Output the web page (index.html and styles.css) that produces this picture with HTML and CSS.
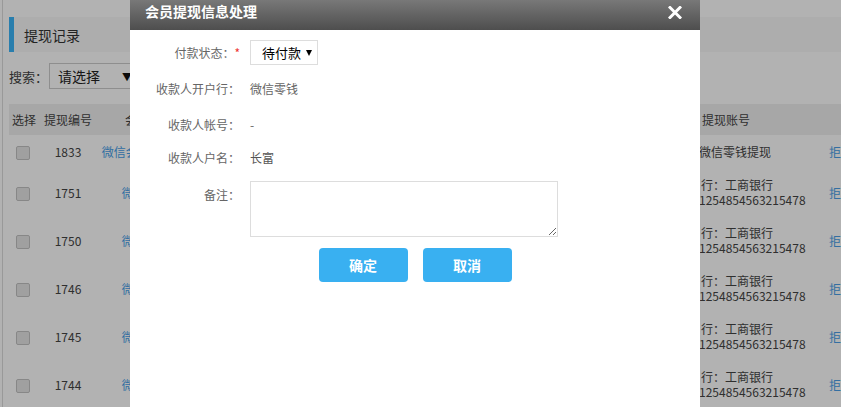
FILE: index.html
```html
<!DOCTYPE html>
<html lang="zh-CN">
<head>
<meta charset="utf-8">
<title>提现记录</title>
<link rel="stylesheet" href="styles.css">
</head>
<body>
<div class="page">
  <div class="title-bar"><span class="title-mark"></span><span class="title-text">提现记录</span></div>
  <div class="search-row">
    <span class="search-label">搜索：</span>
    <div class="fake-select"><span>请选择</span><span class="fake-arrow">▼</span></div>
  </div>
  <table class="list">
    <colgroup>
      <col class="c-check"><col class="c-id"><col class="c-user"><col class="c-amount"><col class="c-time"><col class="c-status"><col class="c-acc"><col class="c-op">
    </colgroup>
    <thead>
      <tr><th>选择</th><th>提现编号</th><th>会员账号</th><th>提现金额</th><th>申请时间</th><th>状态</th><th class="acc">提现账号</th><th class="op"></th></tr>
    </thead>
    <tbody>
      <tr class="first"><td><span class="chk"></span></td><td>1833</td><td><a class="link">微信会员1008611</a></td><td>100.00</td><td>2017-06-01</td><td>待付款</td><td class="acc"><span class="l2">微信零钱提现</span></td><td class="op"><a class="link">拒绝</a></td></tr>
      <tr><td><span class="chk"></span></td><td>1751</td><td><a class="link">微信用户1</a></td><td>50.00</td><td>2017-05-20</td><td>待付款</td><td class="acc"><span class="l1">开户行：工商银行</span><span class="l2">1254854563215478</span></td><td class="op"><a class="link">拒绝</a></td></tr>
      <tr><td><span class="chk"></span></td><td>1750</td><td><a class="link">微信用户1</a></td><td>50.00</td><td>2017-05-20</td><td>待付款</td><td class="acc"><span class="l1">开户行：工商银行</span><span class="l2">1254854563215478</span></td><td class="op"><a class="link">拒绝</a></td></tr>
      <tr><td><span class="chk"></span></td><td>1746</td><td><a class="link">微信用户1</a></td><td>50.00</td><td>2017-05-19</td><td>待付款</td><td class="acc"><span class="l1">开户行：工商银行</span><span class="l2">1254854563215478</span></td><td class="op"><a class="link">拒绝</a></td></tr>
      <tr><td><span class="chk"></span></td><td>1745</td><td><a class="link">微信用户1</a></td><td>50.00</td><td>2017-05-19</td><td>待付款</td><td class="acc"><span class="l1">开户行：工商银行</span><span class="l2">1254854563215478</span></td><td class="op"><a class="link">拒绝</a></td></tr>
      <tr><td><span class="chk"></span></td><td>1744</td><td><a class="link">微信用户1</a></td><td>50.00</td><td>2017-05-18</td><td>待付款</td><td class="acc"><span class="l1">开户行：工商银行</span><span class="l2">1254854563215478</span></td><td class="op"><a class="link">拒绝</a></td></tr>
    </tbody>
  </table>
</div>

<div class="mask"></div>

<div class="dialog">
  <div class="dialog-head">
    <span class="dialog-title">会员提现信息处理</span>
    <svg class="dialog-close" width="14" height="13" viewBox="0 0 14 13" aria-hidden="true"><path d="M2 1.5 L12 11.5 M12 1.5 L2 11.5" stroke="#fff" stroke-width="3" stroke-linecap="square"/></svg>
  </div>
  <div class="dialog-body">
    <div class="form-row row-status">
      <label class="form-label">付款状态：<span class="req">*</span></label>
      <div class="status-select"><span class="status-text">待付款</span><svg width="6" height="6" viewBox="0 0 6 6" aria-hidden="true"><path d="M0 0 H6 L3 6 Z" fill="#000"/></svg></div>
    </div>
    <div class="form-row row-bank">
      <label class="form-label">收款人开户行：</label>
      <span class="form-value">微信零钱</span>
    </div>
    <div class="form-row row-account">
      <label class="form-label">收款人帐号：</label>
      <span class="form-value">-</span>
    </div>
    <div class="form-row row-name">
      <label class="form-label">收款人户名：</label>
      <span class="form-value dark">长富</span>
    </div>
    <div class="form-row row-note">
      <label class="form-label note-label">备注：</label>
      <textarea class="note"></textarea>
    </div>
    <div class="buttons">
      <button class="btn">确定</button>
      <button class="btn">取消</button>
    </div>
  </div>
</div>
</body>
</html>
```

FILE: styles.css
```css
html, body {
  margin: 0;
  padding: 0;
  height: 100%;
  overflow: hidden;
  background: #fff;
  font-family: "Noto Sans CJK SC", "Microsoft YaHei", "Noto Sans", sans-serif;
  color: #333;
}

.page {
  margin-left: 2px;
  border-left: 1px solid #dcdcdc;
  padding: 17px 0 0 6px;
  width: 900px;
  min-height: 100%;
  box-sizing: border-box;
}

.title-bar {
  display: flex;
  align-items: center;
  height: 35px;
  background: #f8f8f8;
}
.title-mark {
  width: 5px;
  height: 35px;
  background: #3cb5f8;
}
.title-text {
  margin-left: 10px;
  font-size: 14px;
  color: #333;
}

.search-row {
  display: flex;
  align-items: center;
  margin-top: 11px;
  height: 26px;
}
.search-label {
  font-size: 13px;
  color: #444;
  width: 40px;
}
.fake-select {
  display: flex;
  align-items: center;
  justify-content: space-between;
  box-sizing: border-box;
  width: 92px;
  height: 26px;
  border: 1px solid #ccc;
  padding: 0 8px 0 8px;
  font-size: 14px;
  color: #222;
  background: #fff;
}
.fake-arrow {
  font-size: 10px;
  color: #111;
}

.list {
  margin-top: 15px;
  border-collapse: collapse;
  table-layout: fixed;
  width: 876px;
  font-size: 12px;
  color: #444;
}
.c-check { width: 30px; }
.c-id { width: 58px; }
.c-user { width: 104px; }
.c-amount { width: 100px; }
.c-time { width: 300px; }
.c-status { width: 97px; }
.c-acc { width: 127px; }
.c-op { width: 60px; }

.list th, .list td {
  padding: 0;
  text-align: center;
  vertical-align: middle;
  white-space: nowrap;
  overflow: hidden;
  font-weight: normal;
}
.list thead tr {
  height: 31px;
  background: #f0f0f0;
}
.list thead th {
  color: #444;
}
.list tbody tr { height: 48px; }
.list tbody tr.first { height: 33px; }

.list .acc {
  text-align: left;
  line-height: 15px;
  overflow: visible;
}
.list th.acc { padding-left: 4px; }
.list .op {
  text-align: left;
  padding-left: 4px;
}
.l1 {
  display: block;
  margin-left: -21px;
}
.l2 {
  display: block;
  margin-left: 1px;
}

.link {
  color: #4a9fe8;
  text-decoration: none;
}

.chk {
  display: inline-block;
  width: 12px;
  height: 12px;
  border: 1px solid #c2c2c2;
  border-radius: 2px;
  background: #e6e6e6;
  vertical-align: middle;
  margin-left: -2px;
}

.mask {
  position: fixed;
  inset: 0;
  background: rgba(0, 0, 0, 0.3);
  z-index: 1;
}

.dialog {
  position: fixed;
  left: 130px;
  top: 0;
  bottom: 0;
  width: 570px;
  background: #fff;
  z-index: 2;
}
.dialog-head {
  display: flex;
  align-items: flex-start;
  justify-content: space-between;
  height: 30px;
  box-sizing: border-box;
  padding: 2px 18px 0 15px;
  background: linear-gradient(to bottom, #787878, #4e4e4e);
}
.dialog-title {
  color: #fff;
  font-weight: bold;
  font-size: 14px;
  line-height: 18px;
}
.dialog-close {
  margin-top: 4px;
}

.dialog-body {
  padding-top: 10px;
}
.form-row {
  display: flex;
  align-items: center;
  gap: 10px;
}
.form-label {
  width: 110px;
  text-align: right;
  font-size: 12px;
  color: #666;
  line-height: 20px;
  flex: none;
}
.req {
  color: #e33;
}
.form-value {
  font-size: 12px;
  color: #666;
  line-height: 20px;
}
.form-value.dark { color: #555; }

.row-status { height: 25px; }
.row-bank { margin-top: 14px; }
.row-account { margin-top: 16px; }
.row-name { margin-top: 13px; }
.row-note {
  margin-top: 13px;
  align-items: flex-start;
}
.note-label { padding-top: 4px; }

.status-select {
  display: flex;
  align-items: center;
  justify-content: space-between;
  box-sizing: border-box;
  width: 68px;
  height: 25px;
  border: 1px solid #ddd;
  padding: 0 5px 0 11px;
  font-size: 13px;
  color: #000;
}

.note {
  display: block;
  box-sizing: border-box;
  width: 308px;
  height: 56px;
  margin: 0;
  border: 1px solid #ddd;
  padding: 4px;
  font-family: inherit;
  font-size: 12px;
}

.buttons {
  display: flex;
  justify-content: center;
  gap: 15px;
  margin-top: 11px;
}
.btn {
  width: 89px;
  height: 34px;
  border: 0;
  border-radius: 4px;
  background: #39b0f1;
  color: #fff;
  font-family: inherit;
  font-size: 14px;
  font-weight: bold;
  padding: 0;
}
```
